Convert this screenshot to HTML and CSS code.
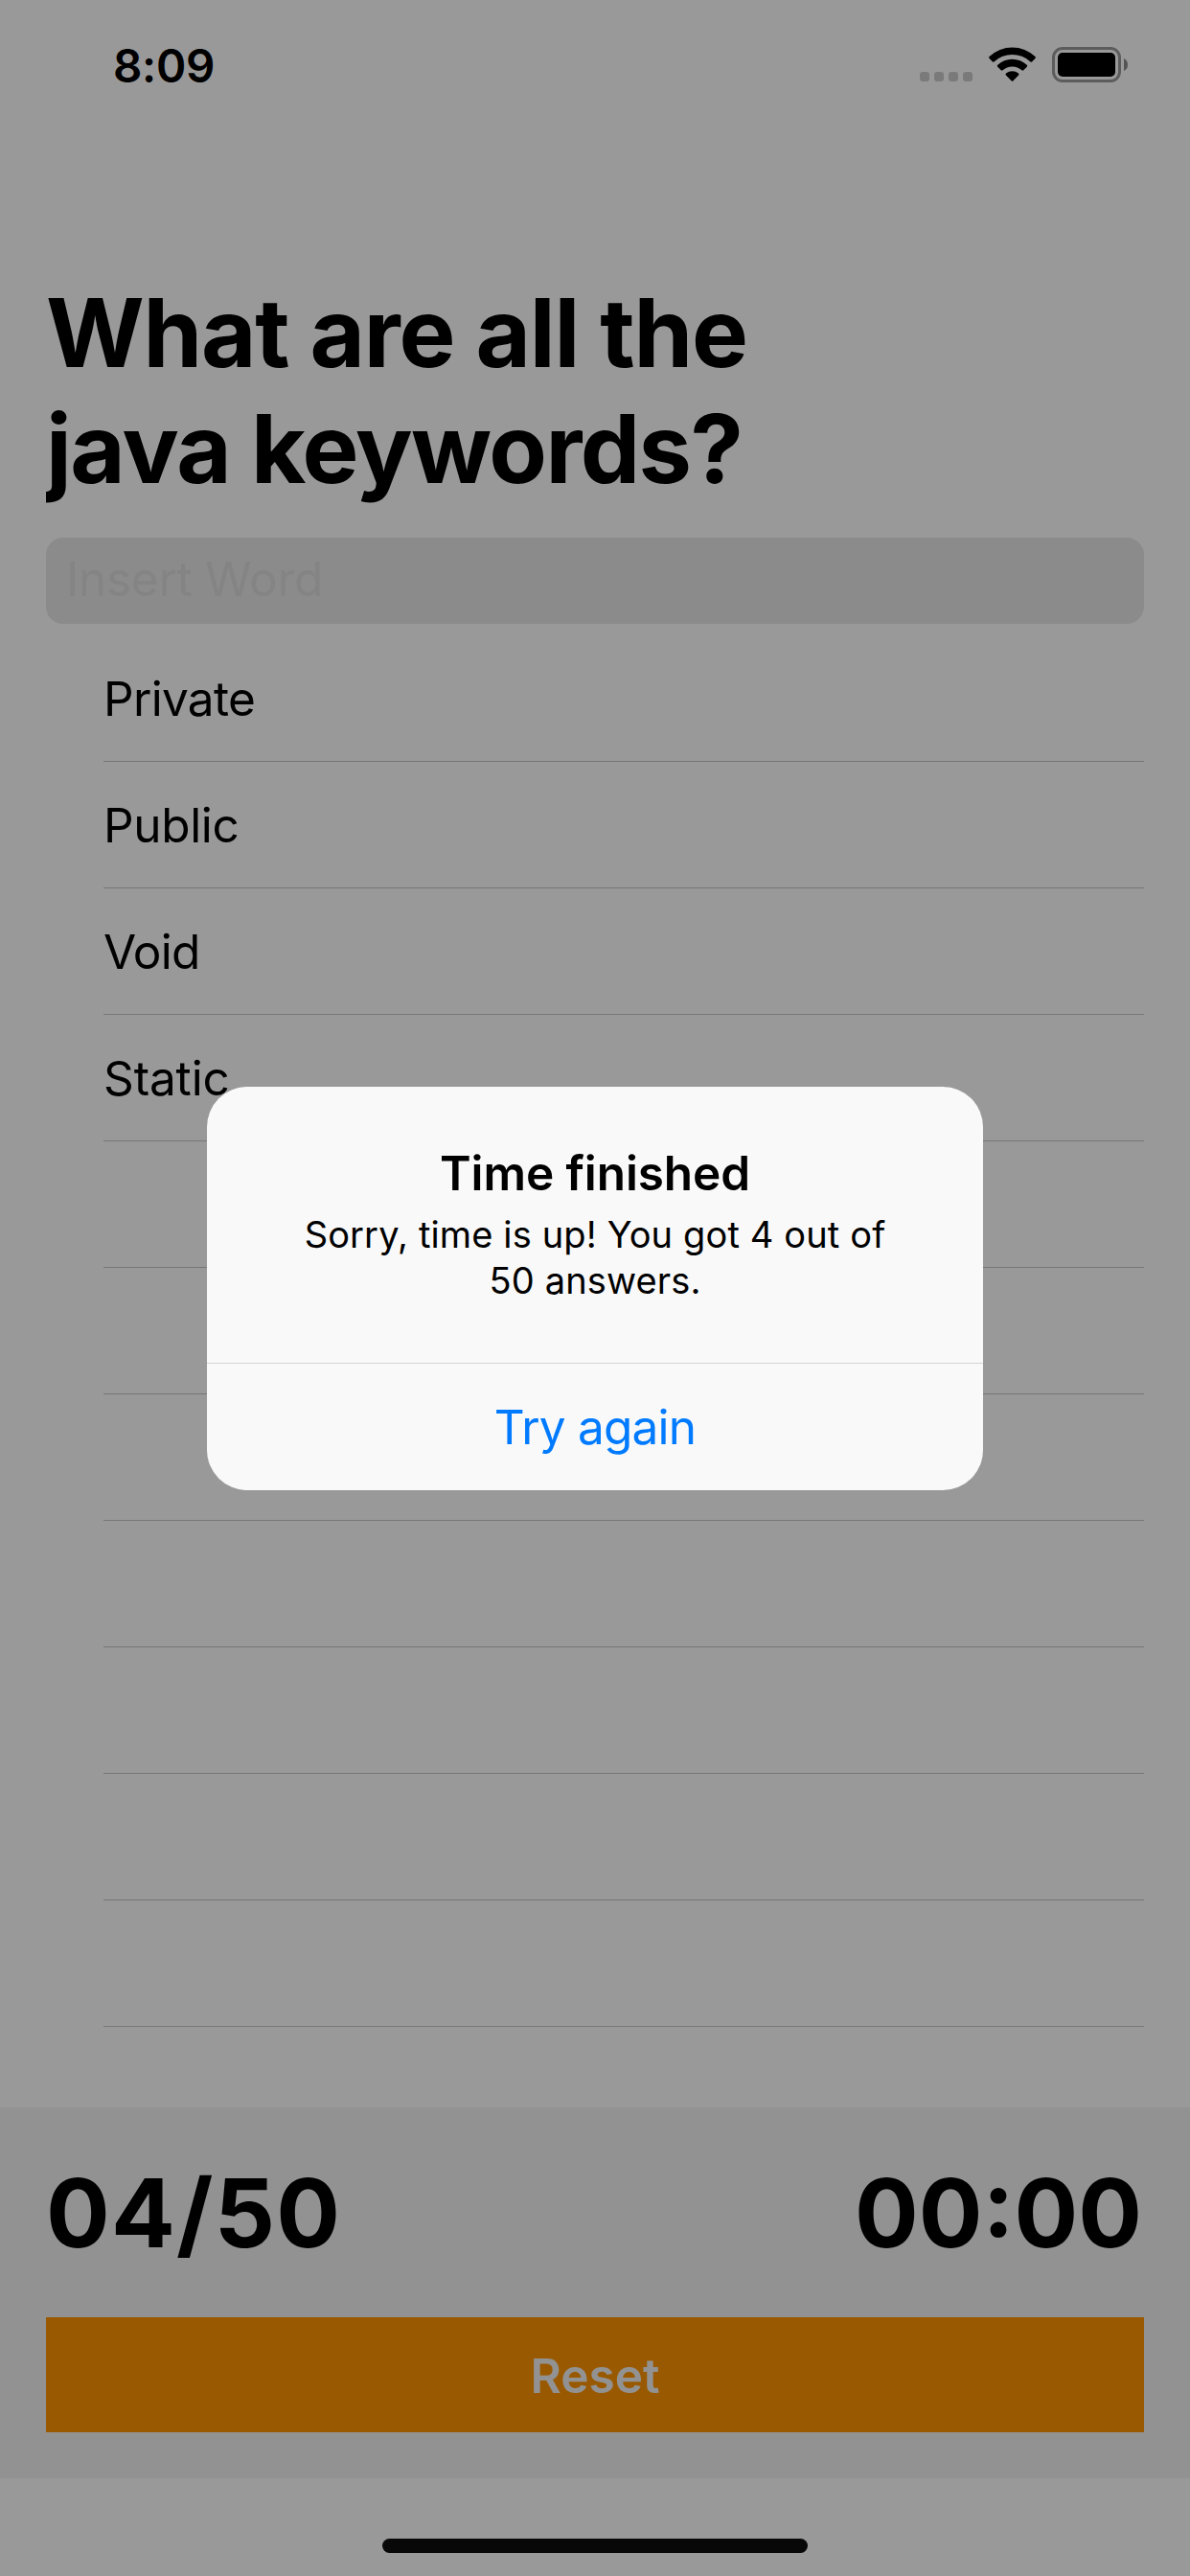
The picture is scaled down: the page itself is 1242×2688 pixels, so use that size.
FILE: index.html
```html
<!DOCTYPE html>
<html lang="en">
<head>
<meta charset="utf-8">
<title>Java keywords quiz</title>
<link rel="stylesheet" href="styles.css">
</head>
<body>
<div class="screen">
  <header class="status-bar">
    <span class="time">8:09</span>
    <svg class="status-icons" viewBox="960 49 218 38" aria-hidden="true">
      <g fill="#000" fill-opacity=".2">
        <rect x="960" y="75" width="10" height="10" rx="3"/>
        <rect x="975" y="75" width="10" height="10" rx="3"/>
        <rect x="990" y="75" width="10" height="10" rx="3"/>
        <rect x="1005" y="75" width="10" height="10" rx="3"/>
      </g>
      <path d="M1032.6 61Q1031.6 60 1032.6 59A34.6 34.6 0 0 1 1080.4 59Q1081.4 60 1080.4 61L1077 64.4Q1076.2 65.2 1075.2 64.3A27.4 27.4 0 0 0 1037.8 64.3Q1036.8 65.2 1036 64.4Z"/>
      <path d="M1041.2 69.7Q1040.2 68.8 1041.3 67.8A22.2 22.2 0 0 1 1071.7 67.8Q1072.8 68.8 1071.8 69.7L1068.2 73.3Q1067.4 74.1 1066.5 73.3A15 15 0 0 0 1046.5 73.3Q1045.6 74.1 1044.8 73.3Z"/>
      <path d="M1049.9 78.5Q1049 77.5 1050 76.6A9.8 9.8 0 0 1 1063 76.6Q1064 77.5 1063.1 78.5L1057.2 84.4Q1056.5 85.1 1055.8 84.4Z"/>
      <rect x="1099.5" y="50.5" width="69" height="34" rx="9.5" fill="none" stroke="#000" stroke-opacity=".4" stroke-width="3"/>
      <path d="M1173 61Q1177 63 1177 67.5T1173 74Z" fill-opacity=".45"/>
      <rect x="1104" y="55" width="60" height="25" rx="5"/>
    </svg>
  </header>

  <main class="content">
    <h1 class="title"><span class="line-one">What are all the</span><br><span class="line-two">java keywords?</span></h1>
    <div class="field">Insert Word</div>
    <ul class="words">
      <li class="private">Private</li>
      <li>Public</li>
      <li class="void">Void</li>
      <li class="static">Static</li>
      <li></li>
      <li></li>
      <li></li>
      <li></li>
      <li></li>
      <li></li>
      <li></li>
    </ul>
  </main>

  <footer class="footer">
    <div class="scores">
      <span class="score">04/50</span>
      <span class="timer">00:00</span>
    </div>
    <button class="reset" type="button">Reset</button>
  </footer>
  <div class="home-area"></div>
</div>

<div class="overlay">
  <div class="alert" role="alertdialog">
    <div class="alert-text">
      <h2>Time finished</h2>
      <p>Sorry, time is up! You got 4 out of 50 answers.</p>
    </div>
    <button class="alert-action" type="button">Try again</button>
  </div>
  <div class="home-indicator"></div>
</div>
</body>
</html>
```
FILE: styles.css
```css
* {
  box-sizing: border-box;
  margin: 0;
  padding: 0;
}

body {
  background: #fff;
  color: #000;
  font-family: Inter, "Liberation Sans", sans-serif;
  font-size: 49.5px;
}

button {
  border: 0;
  font: inherit;
}

.screen {
  display: flex;
  flex-direction: column;
  width: 1242px;
  height: 2688px;
}

.status-bar {
  display: flex;
  justify-content: space-between;
  align-items: center;
  height: 136px;
  padding: 0 64px 0 118px;
}

.time {
  font-size: 47.5px;
  font-weight: 600;
  letter-spacing: -0.3px;
}

.status-icons {
  width: 218px;
  height: 38px;
}

.content {
  flex: 1;
  padding: 151px 48px 0;
}

.title {
  overflow: hidden;
  font-size: 99px;
  font-weight: 700;
  line-height: 121px;
}

.line-one {
  letter-spacing: -1.2px;
}

.line-two {
  letter-spacing: -1.6px;
}

.field {
  height: 90px;
  margin-top: 32px;
  padding-left: 21px;
  border-radius: 18px;
  background: #e8e8e8;
  color: #dcdcdc;
  letter-spacing: -0.28px;
  line-height: 86px;
}

.words {
  margin: 12px 0 0 60px;
  list-style: none;
}

.words li {
  height: 132px;
  border-bottom: 1px solid #c6c6c8;
  letter-spacing: -0.33px;
  line-height: 133px;
}

.words .private {
  letter-spacing: -0.68px;
}

.words .void {
  letter-spacing: -0.77px;
}

.words .static {
  letter-spacing: -0.13px;
}

.footer {
  height: 387px;
  padding: 50px 48px 0;
  background: #f4f4f4;
}

.scores {
  display: flex;
  justify-content: space-between;
  font-size: 99px;
  font-weight: 700;
  line-height: 121px;
}

.score {
  letter-spacing: 1.2px;
}

.timer {
  padding-right: 2px;
}

.reset {
  width: 100%;
  height: 120px;
  margin-top: 48px;
  background: #ff9500;
  color: #f4f4f4;
  font-weight: 600;
  line-height: 122px;
}

.home-area {
  height: 102px;
}

.overlay {
  position: fixed;
  inset: 0;
  display: flex;
  flex-direction: column;
  align-items: center;
  justify-content: space-between;
  padding: 1134px 0 24px;
  background: rgba(0, 0, 0, 0.4);
}

.alert {
  width: 810px;
  height: 421px;
  border-radius: 42px;
  background: #f9f9f9;
  text-align: center;
}

.alert-text {
  height: 288px;
  padding: 60px 90px 0;
}

.alert h2 {
  font-size: 49.5px;
  font-weight: 600;
  letter-spacing: -0.1px;
  line-height: 60px;
}

.alert p {
  margin-top: 10px;
  font-size: 38px;
  letter-spacing: 0.14px;
  line-height: 48px;
}

.alert-action {
  width: 100%;
  height: 133px;
  border-top: 1px solid #d5d5d5;
  background: none;
  color: #007aff;
  letter-spacing: -0.78px;
}

.home-indicator {
  width: 444px;
  height: 15px;
  border-radius: 8px;
  background: #080808;
}
```
